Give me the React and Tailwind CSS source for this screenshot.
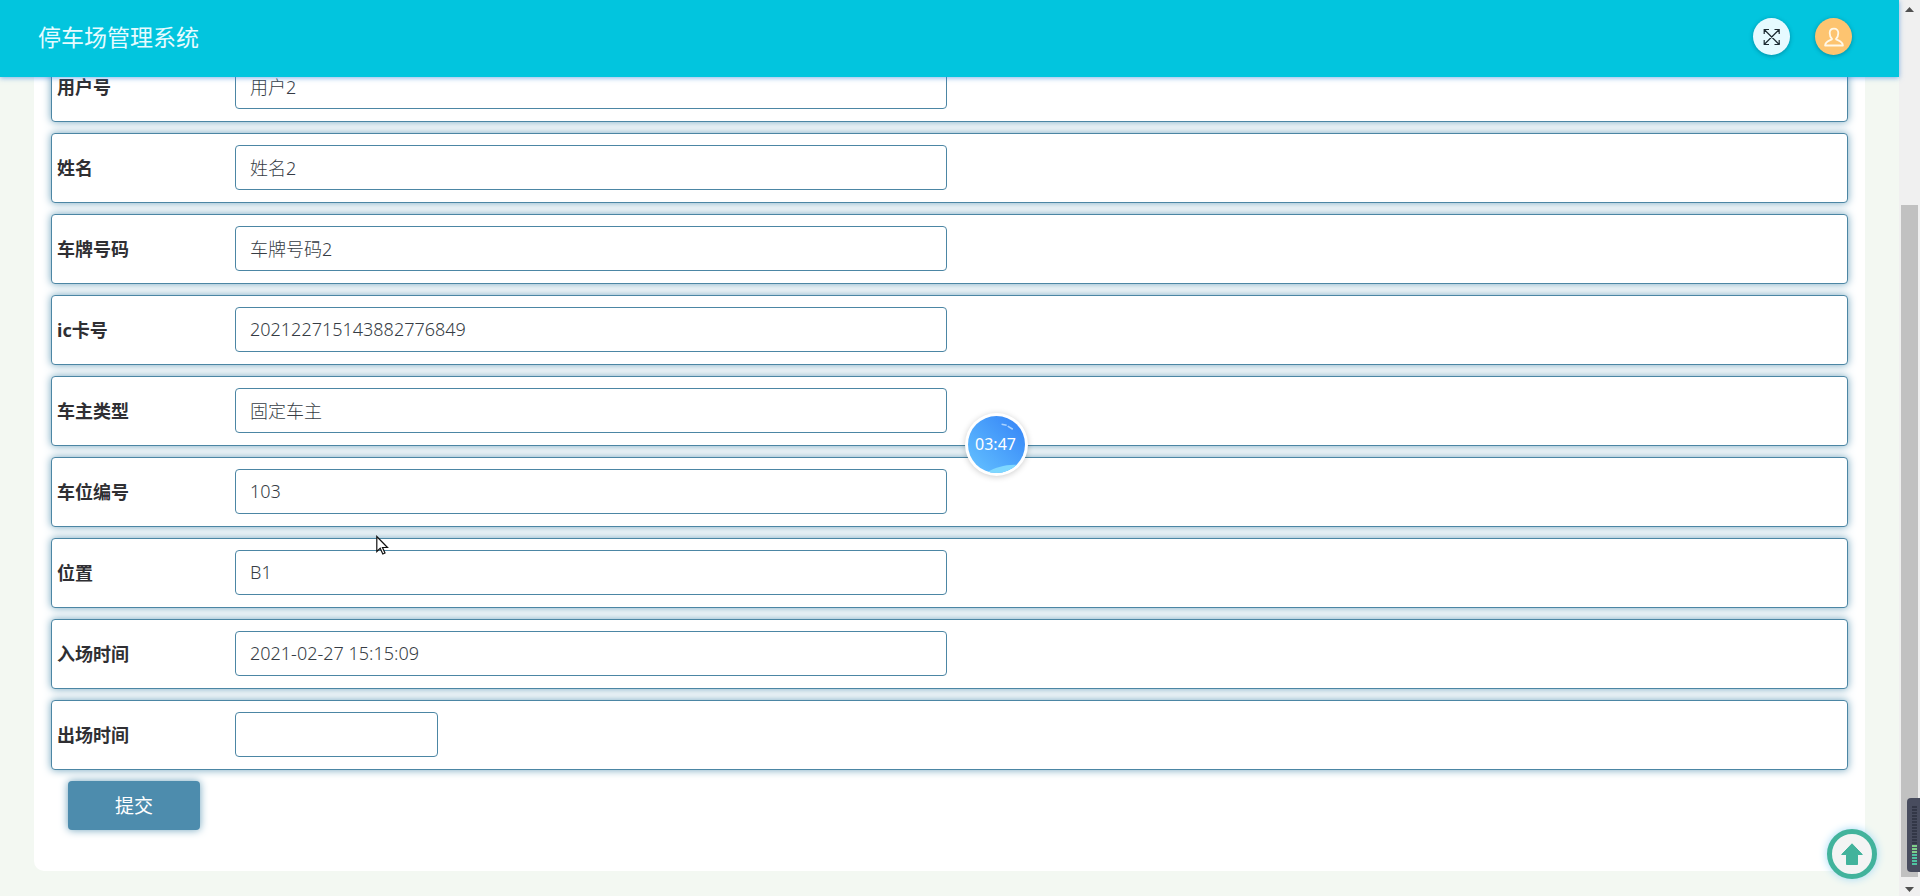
import clsx from 'clsx';

const fields = [
    { id: 'user', label: '用户号', value: '用户2' },
    { id: 'name', label: '姓名', value: '姓名2' },
    { id: 'plate', label: '车牌号码', value: '车牌号码2' },
    { id: 'card', label: 'ic卡号', value: '202122715143882776849' },
    { id: 'owner', label: '车主类型', value: '固定车主' },
    { id: 'space', label: '车位编号', value: '103' },
    { id: 'location', label: '位置', value: 'B1' },
    { id: 'entry', label: '入场时间', value: '2021-02-27 15:15:09' },
    { id: 'exit', label: '出场时间', value: '', short: true },
];

const Header = () => (
    <header className="relative z-10 flex h-[77px] shrink-0 items-center justify-between bg-[#02c5de] pr-[47px] pb-1 pl-[38px] shadow-[0_1px_5px_rgba(50,130,220,0.6)]">
        <h1 className="pt-0.5 text-[23px] text-[#e6fbff]">停车场管理系统</h1>
        <div className="flex gap-[25px]">
            <button type="button" aria-label="全屏" className="flex size-[37px] items-center justify-center rounded-full bg-[#e6faff] shadow-[0_1px_4px_rgba(0,60,80,0.4)]">
                <svg className="size-[18px]" viewBox="0 0 18 18" fill="none" stroke="#1d2b33" strokeWidth="1.2">
                    <path d="M1.200 1.500l15 15M16.200 1.500l-15 15M1.200 6V1.500H6M11.500 1.500h4.700V6M16.200 12v4.500h-4.700M6 16.500H1.200V12" />
                </svg>
            </button>
            <button type="button" aria-label="用户" className="flex size-[37px] items-center justify-center rounded-full bg-[#fdc470] shadow-[0_1px_4px_rgba(0,60,80,0.4)]">
                <svg className="size-5" viewBox="0 0 20 20" fill="none" stroke="#fff8e8" strokeWidth="1.8" strokeLinejoin="round">
                    <path d="M8 12C6.400 10.500 5.700 8.300 5.700 6 5.700 3.300 7.400 1.600 10 1.600s4.300 1.700 4.300 4.400c0 2.300-.7 4.500-2.300 6 .2 1.300 6.600 1.600 6.900 6.500H1.100C1.400 13.600 7.800 13.300 8 12z" />
                </svg>
            </button>
        </div>
    </header>
);

const FieldRow = ({ id, label, value, short }) => (
    <div className="flex h-[70px] shrink-0 items-center rounded-[4px] border border-[#4c86a4] bg-white pb-px pl-[5px] shadow-[0_0_8px_#6fa3bd]">
        <label htmlFor={id} className="w-[178px] shrink-0 text-lg font-bold text-[#2f2f33]">
            {label}
        </label>
        <input
            id={id}
            type="text"
            defaultValue={value}
            className={clsx(
                'h-[45px] rounded-[4px] border border-[#4c86a4] bg-white px-3.5 pb-0.5 text-lg font-light text-[#363c44] outline-none',
                short ? 'w-[203px]' : 'w-[712px]'
            )}
        />
    </div>
);

const Scrollbar = () => (
    <div className="flex w-[21px] shrink-0 flex-col items-center bg-[#f0f0f0]">
        <svg className="h-[21px] w-[9px] shrink-0" viewBox="0 0 9 21" fill="#505050">
            <path d="M0 12L4.500 7 9 12z" />
        </svg>
        <div className="flex w-[17px] flex-1 flex-col">
            <div className="flex-[184]"></div>
            <div className="flex-[672] bg-[#c1c1c1]"></div>
        </div>
        <svg className="h-[19px] w-[9px] shrink-0" viewBox="0 0 9 19" fill="#505050">
            <path d="M0 10L4.500 15 9 10z" />
        </svg>
    </div>
);

// Small level meter docked at the right edge of the window
const LevelMeter = () => (
    <div className="absolute right-0 bottom-6 h-[74px] w-[13px] overflow-hidden rounded-l-[4px] bg-[#484c5e]">
        <svg className="h-full w-full" viewBox="0 0 13 74">
            {Array.from({ length: 20 }, (_, i) => (
                <rect key={i} x="5" y={8 + i * 3} width="5" height="2" fill={i > 12 ? (i > 15 ? '#4fc3a0' : '#7fd08a') : '#333747'} />
            ))}
        </svg>
    </div>
);

const TimerBubble = () => (
    <div className="absolute top-[413px] left-[965px] size-[63px] rounded-full bg-white p-[3px] shadow-[0_1px_6px_rgba(0,0,0,0.2)]">
        <div className="relative flex h-full items-center justify-center overflow-hidden rounded-full bg-linear-to-tr from-[#66c3ff] to-[#3581f6]">
            <svg className="absolute inset-0 h-full w-full" viewBox="0 0 56 56" fill="none">
                <path d="M17 56C27 50 39 47 49 48L45 56z" fill="#7fd8ff" />
                <path d="M33 8l5 1M39 10l5 3" stroke="#a9d2ff" strokeWidth="1.500" />
            </svg>
            <span className="relative pr-0.5 pb-0.5 text-base text-white">03:47</span>
        </div>
    </div>
);

const App = () => {
    return (
        <div className="relative flex h-screen overflow-hidden bg-[#f3f8f2] font-['Noto_Sans','Noto_Sans_CJK_SC',sans-serif]">
            <div className="flex min-w-0 flex-1 flex-col">
                <Header />
                <main className="flex min-h-0 flex-1 flex-col justify-end overflow-hidden px-[34px] pb-[25px]">
                    <form className="flex flex-col gap-[11px] rounded-[10px] bg-white px-[17px] pb-[41px]" onSubmit={(e) => e.preventDefault()}>
                        {fields.map((field) => (
                            <FieldRow key={field.id} {...field} />
                        ))}
                        <button
                            type="submit"
                            className="ml-[17px] h-[49px] w-[132px] rounded-[4px] bg-[#4d8cad] pt-0.5 text-[19px] text-white shadow-[0_0_8px_#6fa3bd]"
                        >
                            提交
                        </button>
                    </form>
                </main>
            </div>
            <Scrollbar />

            <button
                type="button"
                aria-label="返回顶部"
                className="absolute right-[43px] bottom-[17px] flex size-[50px] items-center justify-center rounded-full border-[5px] border-[#42b39c] bg-[#f3f4f4] shadow-[0_0_8px_#9fd8f5]"
            >
                <svg className="size-[22px]" viewBox="0 0 22 22" fill="#42b39c" stroke="#42b39c" strokeLinejoin="round">
                    <path d="M11 .8L21.300 11.500H16.500V21.500H5.500V11.500H.7z" />
                </svg>
            </button>
            <LevelMeter />
            <TimerBubble />

            {/* Mouse pointer */}
            <svg className="absolute top-[535px] left-[376px] h-5 w-[13px]" viewBox="0 0 13 20" fill="#fff" stroke="#111" strokeWidth="1.2">
                <path d="M.8 1.500V16.500L4.200 13.300 6.800 19 9 18 6.500 12.500H11.500z" />
            </svg>
        </div>
    );
};

export default App;
